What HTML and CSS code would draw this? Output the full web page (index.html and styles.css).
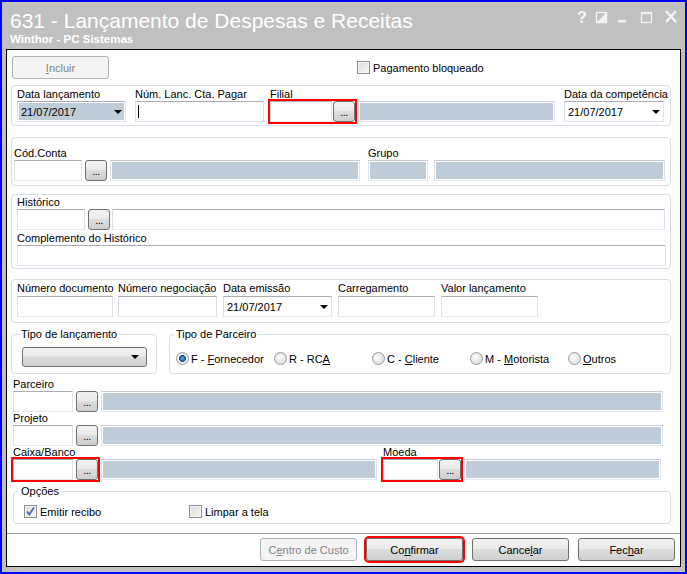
FILE: index.html
```html
<!DOCTYPE html>
<html lang="pt-BR">
<head>
<meta charset="utf-8">
<title>631 - Lançamento de Despesas e Receitas</title>
<link rel="stylesheet" href="styles.css">
</head>
<body>
<div class="window">
  <div class="titlebar">
    <div class="titles">
      <div class="title">631 - Lançamento de Despesas e Receitas</div>
      <div class="subtitle">Winthor - PC Sistemas</div>
    </div>
    <svg class="winctl" width="102" height="18" viewBox="0 0 102 18">
      <text x="0" y="15" class="helpq">?</text>
      <rect x="19.5" y="4.5" width="10" height="10" fill="none" stroke="#f4f4f4" stroke-width="1.4"/>
      <polygon points="20,14 29,5 29,14" fill="#f4f4f4"/>
      <rect x="41" y="12" width="8" height="2.4" fill="#f4f4f4"/>
      <rect x="64.5" y="4.5" width="10" height="10" fill="none" stroke="#f4f4f4" stroke-width="1.3"/>
      <rect x="64" y="4" width="11" height="2.2" fill="#f4f4f4"/>
      <path d="M89 3 L99 14 M99 3 L89 14" stroke="#f4f4f4" stroke-width="2.4" fill="none"/>
    </svg>
  </div>

  <div class="client">
    <div class="toprow">
      <div class="btn dis w97"><span><u>I</u>ncluir</span></div>
      <div class="chk chk-bloq"><span class="box"></span><span>Pagamento bloqueado</span></div>
    </div>

    <div class="grp g1">
      <div class="fld w109">
        <div class="lbl">Data lançamento</div>
        <div class="combo combo-ro"><span>21/07/2017</span><i class="arrow"></i></div>
      </div>
      <div class="fld w129 ml9">
        <div class="lbl">Núm. Lanc. Cta. Pagar</div>
        <div class="tx"><i class="cursor"></i></div>
      </div>
      <div class="fld ml6">
        <div class="lbl">Filial</div>
        <div class="lk mark"><div class="tx w62"></div><div class="dots ml1">...</div></div>
      </div>
      <div class="ro w197 ml3"></div>
      <div class="fld w100 ml9">
        <div class="lbl">Data da competência</div>
        <div class="combo"><span>21/07/2017</span><i class="arrow"></i></div>
      </div>
    </div>

    <div class="grp g2">
      <div class="fld">
        <div class="lbl">Cód.Conta</div>
        <div class="row"><div class="tx w68"></div><div class="dots ml3">...</div><div class="ro w250 ml3"></div></div>
      </div>
      <div class="fld ml8">
        <div class="lbl">Grupo</div>
        <div class="row"><div class="ro w60"></div><div class="ro w231 ml6"></div></div>
      </div>
    </div>

    <div class="grp g3">
      <div class="lbl">Histórico</div>
      <div class="row"><div class="tx w68"></div><div class="dots ml3">...</div><div class="tx w553 ml2"></div></div>
      <div class="lbl mt2">Complemento do Histórico</div>
      <div class="tx w649"></div>
    </div>

    <div class="grp g4">
      <div class="fld w96"><div class="lbl">Número documento</div><div class="tx"></div></div>
      <div class="fld w99 ml5"><div class="lbl">Número negociação</div><div class="tx"></div></div>
      <div class="fld w109 ml6"><div class="lbl">Data emissão</div><div class="combo"><span>21/07/2017</span><i class="arrow"></i></div></div>
      <div class="fld w97 ml6"><div class="lbl">Carregamento</div><div class="tx"></div></div>
      <div class="fld w97 ml6"><div class="lbl">Valor lançamento</div><div class="tx"></div></div>
    </div>

    <div class="fsrow">
      <fieldset class="fs fs-tl">
        <legend>Tipo de lançamento</legend>
        <div class="btncombo"><i class="arrow"></i></div>
      </fieldset>
      <fieldset class="fs fs-tp">
        <legend>Tipo de Parceiro</legend>
        <div class="radios">
          <div class="opt"><span class="rad on"></span><span>F - <u>F</u>ornecedor</span></div>
          <div class="opt"><span class="rad"></span><span>R - RC<u>A</u></span></div>
          <div class="opt"><span class="rad"></span><span>C - <u>C</u>liente</span></div>
          <div class="opt"><span class="rad"></span><span>M - <u>M</u>otorista</span></div>
          <div class="opt"><span class="rad"></span><span><u>O</u>utros</span></div>
        </div>
      </fieldset>
    </div>

    <div class="lower">
      <div class="lbl">Parceiro</div>
      <div class="row"><div class="tx w60"></div><div class="dots ml3">...</div><div class="ro w562 ml3"></div></div>
      <div class="lbl">Projeto</div>
      <div class="row"><div class="tx w60"></div><div class="dots ml3">...</div><div class="ro w562 ml3"></div></div>
      <div class="row">
        <div class="fld w364">
          <div class="lbl">Caixa/Banco</div>
          <div class="row"><div class="lk mark"><div class="tx w60"></div><div class="dots ml3">...</div></div><div class="ro w276 ml3"></div></div>
        </div>
        <div class="fld ml6">
          <div class="lbl">Moeda</div>
          <div class="row"><div class="lk mark mk-moeda"><div class="tx w55"></div><div class="dots ml1">...</div></div><div class="ro w197 ml3"></div></div>
        </div>
      </div>
      <fieldset class="fs fs-op">
        <legend>Opções</legend>
        <div class="opts">
          <div class="chk w165"><span class="box"><svg width="11" height="11" viewBox="0 0 11 11"><path d="M2 5.5 L4.3 8.5 L9 1.5" fill="none" stroke="#4d6ba8" stroke-width="1.8"/></svg></span><span>Emitir recibo</span></div>
          <div class="chk"><span class="box"></span><span>Limpar a tela</span></div>
        </div>
      </fieldset>
    </div>

    <div class="bottom">
      <div class="btn dis w97"><span>C<u>e</u>ntro de Custo</span></div>
      <div class="btn w97 mark"><span>Co<u>n</u>firmar</span></div>
      <div class="btn w97"><span>Cance<u>l</u>ar</span></div>
      <div class="btn w97"><span>Fec<u>h</u>ar</span></div>
    </div>
  </div>
</div>
</body>
</html>
```

FILE: styles.css
```css
* { box-sizing: border-box; }
html, body { margin: 0; padding: 0; }
body {
  font-family: "Liberation Sans", Arial, sans-serif;
  font-size: 11px;
  color: #000;
  background: #fff;
}

.window {
  width: 687px;
  height: 574px;
  border: 2px solid #0000f4;
  background: #c0c0c0;
  display: flex;
  flex-direction: column;
}

.titlebar {
  height: 47px;
  display: flex;
  justify-content: space-between;
  align-items: flex-start;
  padding: 0 6px 0 8px;
  color: #fff;
}
.titles { padding-top: 7px; }
.title { font-size: 21px; line-height: 24px; white-space: nowrap; }
.subtitle { font-size: 11.5px; font-weight: bold; line-height: 13px; }
.winctl { margin-top: 6px; }
.helpq { font: bold 16px "Liberation Sans", Arial, sans-serif; fill: #f4f4f4; }

.client {
  flex: 1;
  margin: 0 4px 5px 4px;
  border: 1px solid #000;
  background: #fff;
  display: flex;
  flex-direction: column;
}

/* generic bits */
.lbl { line-height: 13px; height: 13px; white-space: nowrap; }
.row { display: flex; }
.fld { display: flex; flex-direction: column; }
.mt2 { margin-top: 2px; }
.ml1 { margin-left: 1px; }
.ml2 { margin-left: 2px; }
.ml3 { margin-left: 3px; }
.ml5 { margin-left: 5px; }
.ml6 { margin-left: 6px; }
.ml8 { margin-left: 8px; }
.ml9 { margin-left: 9px; }
.w55 { width: 55px; }
.w60 { width: 60px; }
.w62 { width: 62px; }
.w68 { width: 68px; }
.w96 { width: 96px; }
.w97 { width: 97px; }
.w99 { width: 99px; }
.w100 { width: 100px; }
.w109 { width: 109px; }
.w129 { width: 129px; }
.w165 { width: 165px; }
.w197 { width: 197px; }
.w231 { width: 231px; }
.w250 { width: 250px; }
.w276 { width: 276px; }
.w364 { width: 364px; }
.w553 { width: 553px; }
.w562 { width: 562px; }
.w649 { width: 649px; }

.tx {
  height: 21px;
  border: 1px solid;
  border-color: #abadb3 #e2e3ea #e3e9ef #dbdfe6;
  background: #fff;
  display: flex;
  align-items: center;
}
.cursor { display: block; width: 1px; height: 13px; background: #000; margin-left: 2px; }

.ro {
  height: 21px;
  border: 1px solid;
  border-color: #c9ccd2 #e2e3ea #e3e9ef #dbdfe6;
  background: #bfcdd9;
  box-shadow: inset 0 0 0 1px #fff;
}

.combo {
  height: 21px;
  border: 1px solid;
  border-color: #abadb3 #e2e3ea #e3e9ef #dbdfe6;
  background: #fff;
  display: flex;
  align-items: center;
  padding-left: 3px;
}
.combo-ro { background: #bfcdd9; box-shadow: inset 0 0 0 1px #fff; }
.arrow {
  display: block;
  width: 0;
  height: 0;
  border-left: 4px solid transparent;
  border-right: 4px solid transparent;
  border-top: 4px solid #000;
  margin-left: auto;
  margin-right: 3px;
}

.dots {
  width: 22px;
  height: 21px;
  border: 1px solid #707070;
  border-radius: 3px;
  background: linear-gradient(#f2f2f2, #ebebeb 45%, #dddddd 50%, #cfcfcf);
  font-size: 11px;
  line-height: 20px;
  text-align: center;
  letter-spacing: -0.5px;
}

.lk { display: flex; }
.mark { outline: 2px solid #ff0000; outline-offset: 0; }

.btn {
  height: 23px;
  border: 1px solid #707070;
  border-radius: 3px;
  background: linear-gradient(#f2f2f2, #ebebeb 45%, #dddddd 50%, #cfcfcf);
  display: flex;
  align-items: center;
  justify-content: center;
}
.btn.dis { border-color: #adb2b5; background: #f4f4f4; color: #838383; }

.chk { display: flex; align-items: center; gap: 3px; }
.box {
  width: 13px;
  height: 13px;
  border: 1px solid #8e8f8f;
  background: linear-gradient(135deg, #dcdcdc, #f6f6f6);
  box-shadow: inset 0 0 0 1px #f4f4f4;
  display: flex;
  align-items: center;
  justify-content: center;
}

/* top row */
.toprow { display: flex; align-items: center; padding: 6px 0 0 5px; }
.chk-bloq { margin-left: 248px; }

/* group boxes */
.grp {
  margin-left: 4px;
  width: 660px;
  border: 1px solid #d5dfe5;
  border-radius: 4px;
}
.g1 { display: flex; align-items: flex-end; margin-top: 6px; padding: 2px 0 3px 5px; }
.g2 { display: flex; align-items: flex-end; margin-top: 11px; padding: 9px 0 4px 2px; }
.g3 { margin-top: 8px; padding: 1px 0 2px 5px; }
.g4 { display: flex; align-items: flex-end; margin-top: 10px; padding: 2px 0 5px 5px; }
.g4 .lbl { margin-bottom: 1px; }

/* fieldsets */
.fsrow { display: flex; margin: 5px 0 0 4px; }
.fs {
  margin: 0;
  padding: 0;
  min-width: 0;
  border: 1px solid #d5dfe5;
  border-radius: 4px;
}
.fs legend { padding: 0 2px; line-height: 13px; font-size: 11px; }
.fs-tl { width: 146px; height: 46px; }
.fs-tl legend { margin-left: 7px; }
.fs-tp { width: 502px; height: 46px; margin-left: 12px; }
.fs-tp legend { margin-left: 4px; }

.btncombo {
  margin: 6px 0 0 10px;
  width: 125px;
  height: 20px;
  border: 1px solid #707070;
  border-radius: 3px;
  background: linear-gradient(#f2f2f2, #ebebeb 45%, #dddddd 50%, #cfcfcf);
  display: flex;
  align-items: center;
}
.btncombo .arrow { margin-right: 7px; }

.radios { display: flex; padding: 11px 0 0 6px; }
.opt { width: 98px; display: flex; align-items: center; gap: 2px; white-space: nowrap; }
.rad {
  width: 13px;
  height: 13px;
  border-radius: 50%;
  border: 1px solid #9a9a9a;
  background: radial-gradient(circle at 40% 40%, #fdfdfd, #d4d4d4);
}
.rad.on {
  background: radial-gradient(circle at 50% 50%, #6fb4ea 0, #2a6cb0 2.2px, #1d4f86 3.2px, #f4f4f4 3.8px, #d4d4d4 100%);
}

/* lower part */
.lower { padding-left: 6px; margin-top: 4px; }
.fs-op { width: 658px; height: 39px; margin-top: 5px; }
.fs-op legend { margin-left: 5px; }
.opts { display: flex; padding: 7px 0 0 10px; }

/* bottom buttons */
.bottom {
  margin-top: auto;
  height: 33px;
  border-top: 1px solid #a0a0a0;
  display: flex;
  justify-content: flex-end;
  gap: 9px;
  padding: 4px 5px 0 0;
}
```
